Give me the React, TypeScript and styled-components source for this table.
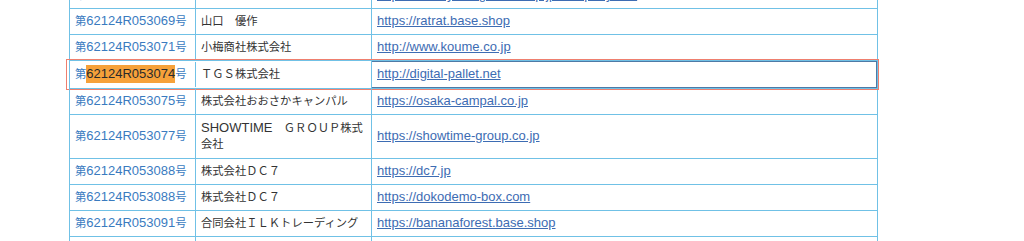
import React from 'react';
import styled, { createGlobalStyle } from 'styled-components';

const GlobalStyle = createGlobalStyle`
  html, body {
    margin: 0;
    padding: 0;
    background: #ffffff;
  }
  body {
    font-family: "Liberation Sans", "Noto Sans CJK JP", sans-serif;
    font-size: 13px;
    color: #333333;
    overflow: hidden;
  }
`;

const Page = styled.div`
  padding-left: 69px;
  margin-top: -17px;
`;

const Table = styled.div`
  width: 809px;
  box-sizing: border-box;
  border-right: 1px solid #70c1e6;
`;

const Row = styled.div<{ $active?: boolean }>`
  position: relative;
  display: grid;
  grid-template-columns: 126px 176px 506px;
  border-bottom: 1px solid #70c1e6;

  ${({ $active }) =>
    $active &&
    `
    &::after {
      content: '';
      position: absolute;
      top: -2px;
      bottom: -2px;
      left: -3px;
      right: -2px;
      border: 1px solid #ef7f6e;
      pointer-events: none;
    }
  `}
`;

const Cell = styled.div<{ $tall?: boolean }>`
  box-sizing: border-box;
  display: flex;
  align-items: center;
  border-left: 1px solid #70c1e6;
  padding: ${({ $tall }) => ($tall ? '5px 5px 6px' : '4px 5px 5px')};
  line-height: 16px;
  min-width: 0;
`;

const NumberCell = styled(Cell)`
  color: #3a7bbf;
  white-space: nowrap;
`;

const NameCell = styled(Cell)`
  color: #333333;
  display: block;
  align-self: center;
`;

const UrlCell = styled(Cell)<{ $focus?: boolean }>`
  box-shadow: ${({ $focus }) =>
    $focus ? 'inset 0 1px 0 #4e7aa6, inset 0 -1px 0 #4e7aa6, inset -1px 0 0 #4e7aa6' : 'none'};
`;

const Link = styled.a`
  color: #3d6cb3;
  text-decoration: underline;
  text-underline-offset: 1px;
`;

const Jp = styled.span`
  font-family: "Noto Sans CJK JP", sans-serif;
  font-size: 11.3px;
  line-height: 1;
`;

const Find = styled.span`
  background: #f6a13a;
  color: #2a2a2a;
  padding: 1px 0;
`;

const CJK = /([\u3000-\u30ff\u4e00-\u9fff\uff00-\uffef]+)/;

const mixed = (text: string) =>
  text.split(CJK).map((part, i) => (CJK.test(part) ? <Jp key={i}>{part}</Jp> : part));

interface Entry {
  no: string;
  name: string;
  url: string;
  find?: boolean;
  focus?: boolean;
  tall?: boolean;
}

const entries: Entry[] = [
  { no: '62124R053068', name: '株式会社やまぐち', url: 'https://www.yamaguchi-shop.jp/company/info' },
  { no: '62124R053069', name: '山口　優作', url: 'https://ratrat.base.shop' },
  { no: '62124R053071', name: '小梅商社株式会社', url: 'http://www.koume.co.jp' },
  { no: '62124R053074', name: 'ＴＧＳ株式会社', url: 'http://digital-pallet.net', find: true, focus: true },
  { no: '62124R053075', name: '株式会社おおさかキャンパル', url: 'https://osaka-campal.co.jp' },
  { no: '62124R053077', name: 'SHOWTIME　ＧＲＯＵＰ株式会社', url: 'https://showtime-group.co.jp', tall: true },
  { no: '62124R053088', name: '株式会社ＤＣ７', url: 'https://dc7.jp' },
  { no: '62124R053088', name: '株式会社ＤＣ７', url: 'https://dokodemo-box.com' },
  { no: '62124R053091', name: '合同会社ＩＬＫトレーディング', url: 'https://bananaforest.base.shop' },
  { no: '62124R053092', name: '株式会社さくら', url: 'https://sakura-shop.jp' },
];

export default function App() {
  return (
    <>
      <GlobalStyle />
      <Page>
        <Table>
          {entries.map((e, i) => (
            <Row key={i} $active={e.focus}>
              <NumberCell>
                <Jp>第</Jp>
                {e.find ? <Find>{e.no}</Find> : e.no}
                <Jp>号</Jp>
              </NumberCell>
              <NameCell $tall={e.tall}>{mixed(e.name)}</NameCell>
              <UrlCell $focus={e.focus}>
                <Link href={e.url}>{e.url}</Link>
              </UrlCell>
            </Row>
          ))}
        </Table>
      </Page>
    </>
  );
}
